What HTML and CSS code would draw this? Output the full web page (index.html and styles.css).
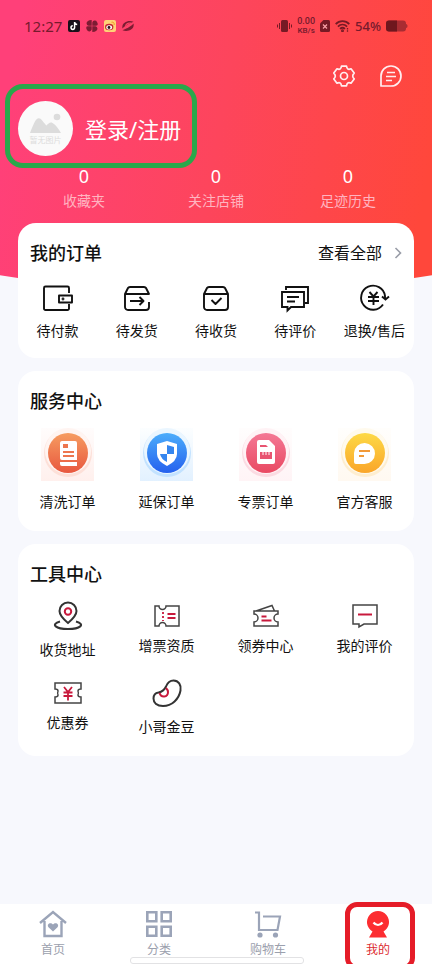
FILE: index.html
```html
<!DOCTYPE html>
<html lang="zh-CN">
<head>
<meta charset="utf-8">
<meta name="viewport" content="width=device-width, initial-scale=1">
<title>我的</title>
<link rel="stylesheet" href="styles.css">
</head>
<body>
<div class="page">
  <header class="hero">
    <div class="status">
      <div class="group left">
        <span class="time">12:27</span>
        <svg width="12" height="12" viewBox="0 0 12 12"><rect width="12" height="12" rx="2" fill="#17101a"/><path d="M6.600 2v5.600a1.800 1.800 0 1 1-1.800-1.800M6.600 2.200c.2 1.400 1.100 2.200 2.600 2.300" fill="none" stroke="#fff" stroke-width="1.500"/></svg>
        <svg width="12" height="12" viewBox="0 0 12 12" fill="#7d1c33"><path d="M5.700 0v5.700H2.500A2.500 2.500 0 0 1 2 1Q3 0 5.700 0zM6.300 5.700V2.500A2.500 2.500 0 0 1 11 2q2 3.700-1 3.700zM6.300 12V6.300h3.200A2.500 2.500 0 0 1 10 11q-1 1-3.700 1zM5.700 6.300v3.200A2.500 2.500 0 0 1 1 10q-2-3.700 1-3.700z"/></svg>
        <svg width="12" height="12" viewBox="0 0 12 12"><rect width="12" height="12" rx="2" fill="#ffd277"/><ellipse cx="5.200" cy="7" rx="4.200" ry="3.200" fill="#c52832"/><ellipse cx="5.200" cy="7.400" rx="2.900" ry="2.100" fill="#fff"/><circle cx="5" cy="7.500" r="1.400" fill="#251418"/><path d="M7.500 2.200c2-.4 3.200 1 2.600 2.800" fill="none" stroke="#f09a25"/></svg>
        <svg width="12" height="12" viewBox="0 0 12 12" fill="#7d1c33"><path d="M.5 8.500C-1 3 6-.5 11.500 1.800 9 3 4 4.500.5 8.500zM11.500 3.500C13 9 6 12.500.5 10.200 3 9 8 7.500 11.500 3.500z"/><path d="M3 6.500C5 4.500 7.500 3.200 9.500 2.800 8 1.800 3 2.500 3 6.500z" fill="#fb4566"/></svg>
      </div>
      <div class="group">
        <svg width="15" height="14" viewBox="0 0 15 14" fill="#761a25"><rect x="4" y="1" width="7" height="12" rx="1.500"/><path d="M2 4h1v6H2zM0 5.500h1v3H0zM12 4h1v6h-1zM14 5.500h1v3h-1z"/></svg>
        <span class="speed"><span>0.00</span><span class="unit">KB/s</span></span>
        <svg width="10" height="12" viewBox="0 0 10 12"><path d="M3.500 0H8.500A1.500 1.500 0 0 1 10 1.500v9A1.500 1.500 0 0 1 8.500 12h-7A1.500 1.500 0 0 1 0 10.500v-7z" fill="#761a25"/><path d="M3 4.500l4 4M7 4.500l-4 4" stroke="#f9a0a6" stroke-width="1.200"/></svg>
        <svg width="15" height="12" viewBox="0 0 15 12" fill="none" stroke="#761a25" stroke-width="1.700"><path d="M.7 4.200C4.500.2 10.500.2 14.300 4.200M2.900 6.600c2.700-2.700 6.500-2.700 9.200 0M5 8.900c1.500-1.400 3.500-1.400 5 0"/><circle cx="7.500" cy="10.800" r=".6"/><path d="M12.500 8v1.500M12.500 10.300v1.500" stroke-width="1.300"/></svg>
        <span class="percent">54%</span>
        <svg width="22" height="12" viewBox="0 0 22 12"><rect y=".5" width="20" height="11" rx="3" fill="#a92c32"/><path d="M3 .5h8v11H3a3 3 0 0 1-3-3v-5a3 3 0 0 1 3-3z" fill="#6f171e"/><path d="M20 4c2 0 2 4 0 4z" fill="#a92c32"/></svg>
      </div>
    </div>
    <div class="tools">
      <button type="button" aria-label="设置"><svg width="24" height="24" viewBox="0 0 24 24" fill="none" stroke="#ffeef0" stroke-width="1.700" stroke-linejoin="round"><path d="M9.500 2.200h5c.4 3 1.800 3.700 4.500 2.600l3.200 4.300c-2 1.900-2 3.900 0 5.800L19 19.200c-2.700-1.100-4.100-.4-4.500 2.600h-5c-.4-3-1.800-3.700-4.500-2.600l-3.200-4.300c2-1.900 2-3.900 0-5.800L5 4.800c2.700 1.100 4.100.4 4.500-2.600z"/><circle cx="12" cy="12" r="3.500"/></svg></button>
      <button type="button" aria-label="消息"><svg width="24" height="24" viewBox="0 0 24 24" fill="none" stroke="#ffeef0" stroke-width="1.700"><path d="M2 22V12A10 10 0 1 1 12 22z" stroke-linejoin="round"/><path d="M8 8.500h8M7 12.500h10M7 16.500h6"/></svg></button>
    </div>
    <a class="profile" href="#">
      <span class="avatar">
        <svg width="32" height="22" viewBox="0 0 32 22" fill="#dcdcdc"><path d="M0 20C3 13 5 6 8.500 5.300c3-.4 5 4.700 8 7.200 2-2 3.500-3.800 6-2.500 3.500 2 6 6 8.500 10z"/><circle cx="27" cy="4" r="3.300"/></svg>
        <span>暂无图片</span>
      </span>
      <span class="login">登录/注册</span>
    </a>
    <nav class="stats">
      <a href="#"><b>0</b><span>收藏夹</span></a>
      <a href="#"><b>0</b><span>关注店铺</span></a>
      <a href="#"><b>0</b><span>足迹历史</span></a>
    </nav>
  </header>

  <main class="cards">
    <section class="card orders">
      <div class="head">
        <h2>我的订单</h2>
        <a class="more" href="#">查看全部 <svg width="8" height="12" viewBox="0 0 8 12" fill="none" stroke="#999da8" stroke-width="1.600"><path d="M1.500 1l5 5-5 5"/></svg></a>
      </div>
      <div class="grid five">
        <a class="item" href="#"><svg width="32" height="32" viewBox="0 0 32 32" fill="none" stroke="#111" stroke-width="1.900" stroke-linejoin="round"><path d="M27 11V6A1.500 1.500 0 0 0 25.500 4.500h-22A1.500 1.500 0 0 0 2 6v20.500A1.500 1.500 0 0 0 3.500 28h22a1.500 1.500 0 0 0 1.500-1.500V22M17 13.500h13v7H17z"/><circle cx="21" cy="17" r=".5"/></svg><span>待付款</span></a>
        <a class="item" href="#"><svg width="32" height="32" viewBox="0 0 32 32" fill="none" stroke="#111" stroke-width="1.900" stroke-linejoin="round"><path d="M28 20v5a3 3 0 0 1-3 3H7a3 3 0 0 1-3-3V12l3-6q.5-1 2-1h14q1.500 0 2 1l3 6H4"/><path d="M9 19h13M18.500 15l4 4-4 4"/></svg><span>待发货</span></a>
        <a class="item" href="#"><svg width="32" height="32" viewBox="0 0 32 32" fill="none" stroke="#111" stroke-width="1.900" stroke-linejoin="round"><path d="M4 12l3-6q.5-1 2-1h14q1.500 0 2 1l3 6v13a3 3 0 0 1-3 3H7a3 3 0 0 1-3-3zM4 12h24M11.500 18l4 4 6-6"/></svg><span>待收货</span></a>
        <a class="item" href="#"><svg width="32" height="32" viewBox="0 0 32 32" fill="none" stroke="#111" stroke-width="1.900"><path d="M3 10h22v15H12l-3.500 3.500V25H3zM7 8V5h22v16h-3M8 15h12M8 19.500h8"/></svg><span>待评价</span></a>
        <a class="item" href="#"><svg width="32" height="32" viewBox="0 0 32 32" fill="none" stroke="#111" stroke-width="1.900"><path d="M25 22.500A12 12 0 1 1 27 14v3"/><path d="M24 14.500l3.500 3 3.500-3M11.500 10l4 4.500 4-4.500M10 15h11M10 19h11M15.500 14.500V23"/></svg><span>退换/售后</span></a>
      </div>
    </section>

    <section class="card services">
      <div class="head"><h2>服务中心</h2></div>
      <div class="grid four">
        <a class="item" href="#"><svg width="53" height="53" viewBox="0 0 53 53"><defs><linearGradient id="orange" x2="0" y2="1"><stop stop-color="#f69c61"/><stop offset="1" stop-color="#e8583f"/></linearGradient><linearGradient id="orange-bg" x2="0" y2="1"><stop stop-color="#fffcfc"/><stop offset="1" stop-color="#fff0ed"/></linearGradient></defs><path fill="url(#orange-bg)" d="M0 0h53v53H0z"/><circle cx="27" cy="25" r="24" fill="#fde0d8"/><circle cx="27" cy="23" r="23" fill="#fff4f1"/><circle cx="27" cy="25" r="20" fill="url(#orange)"/><path d="M21 13h13q2 0 2 2v17H21q-2 0-2-2V15q0-2 2-2zM19 34h17v4H21q-2 0-2-2z" fill="#fff"/><path d="M22 16h5v4h-5zM22 23h11v2H22zM22 27h11v2H22z" fill="#ed764e"/></svg><span>清洗订单</span></a>
        <a class="item" href="#"><svg width="53" height="53" viewBox="0 0 53 53"><defs><linearGradient id="blue" x2="0" y2="1"><stop stop-color="#4badfb"/><stop offset="1" stop-color="#2561ee"/></linearGradient><linearGradient id="blue-bg" x2="0" y2="1"><stop stop-color="#fcfeff"/><stop offset="1" stop-color="#e2f1ff"/></linearGradient></defs><path fill="url(#blue-bg)" d="M0 0h53v53H0z"/><circle cx="27" cy="25" r="24" fill="#c2e2ff"/><circle cx="27" cy="23" r="23" fill="#eaf6ff"/><circle cx="27" cy="25" r="20" fill="url(#blue)"/><path d="M27 13l10 3v10q0 7-10 12-10-5-10-12V16z" fill="#fff"/><path d="M27 17l7 2v7h-7zM20 26h7v8q-6-3-7-8z" fill="#3586ef"/></svg><span>延保订单</span></a>
        <a class="item" href="#"><svg width="53" height="53" viewBox="0 0 53 53"><defs><linearGradient id="pink" x2="0" y2="1"><stop stop-color="#f47895"/><stop offset="1" stop-color="#e94962"/></linearGradient><linearGradient id="pink-bg" x2="0" y2="1"><stop stop-color="#fffdfd"/><stop offset="1" stop-color="#fff4f6"/></linearGradient></defs><path fill="url(#pink-bg)" d="M0 0h53v53H0z"/><circle cx="27" cy="25" r="24" fill="#fbdbe2"/><circle cx="27" cy="23" r="23" fill="#fff2f5"/><circle cx="27" cy="25" r="20" fill="url(#pink)"/><path d="M20 12h10l6 6v16q0 2-2 2H20q-2 0-2-2V14q0-2 2-2z" fill="#fff"/><path d="M21 17h6l2 2h-8zM21 24h12v7H21z" fill="#e85470"/><path d="M24 24v3M27 24v3M30 24v3" stroke="#fff"/></svg><span>专票订单</span></a>
        <a class="item" href="#"><svg width="53" height="53" viewBox="0 0 53 53"><defs><linearGradient id="yellow" x2="0" y2="1"><stop stop-color="#fdd946"/><stop offset="1" stop-color="#faa62a"/></linearGradient><linearGradient id="yellow-bg" x2="0" y2="1"><stop stop-color="#fffefc"/><stop offset="1" stop-color="#fff9f1"/></linearGradient></defs><path fill="url(#yellow-bg)" d="M0 0h53v53H0z"/><circle cx="27" cy="25" r="24" fill="#feeed0"/><circle cx="27" cy="23" r="23" fill="#fffaed"/><circle cx="27" cy="25" r="20" fill="url(#yellow)"/><path d="M16 25a10.500 10.500 0 1 1 10.500 11H18q-2 0-2-2z" fill="#fff"/><path d="M21 23h11M21 28h5" stroke="#f29a38" stroke-width="2.200"/></svg><span>官方客服</span></a>
      </div>
    </section>

    <section class="card toolbox">
      <div class="head"><h2>工具中心</h2></div>
      <div class="grid four">
        <a class="item tall" href="#"><svg width="36" height="36" viewBox="0 0 36 36" fill="none" stroke="#333" stroke-width="2"><path d="M18 25C12 20 9.500 17 9.500 13a8.500 8.500 0 0 1 17 0c0 4-2.500 7-8.500 12z"/><path d="M10 23.500c-10 3-4 7.500 8 7.500s18-4.500 8-7.500"/><circle cx="18" cy="13.500" r="3.200" stroke="#c8193c"/></svg><span>收货地址</span></a>
        <a class="item" href="#"><svg width="28" height="28" viewBox="0 0 28 28" fill="none" stroke="#444" stroke-width="1.500"><path d="M2 4h4a3.500 3.500 0 0 0 7 0h13v20H13a3.500 3.500 0 0 0-7 0H2z"/><path d="M10 10v2M10 14v2M10 18v1M14.500 12h8M14.500 16h8" stroke="#c8193c" stroke-width="1.800"/></svg><span>增票资质</span></a>
        <a class="item" href="#"><svg width="28" height="28" viewBox="0 0 28 28" fill="none" stroke="#444" stroke-width="1.500"><path d="M2 9h24v3a4 4 0 0 0 0 8v4H2v-4a4 4 0 0 0 0-8zM4 9l16-5.500L22.500 9"/><path d="M9.500 14.500h5M9.500 18.500h10" stroke="#c8193c" stroke-width="1.800"/></svg><span>领券中心</span></a>
        <a class="item" href="#"><svg width="28" height="28" viewBox="0 0 28 28" fill="none" stroke="#444" stroke-width="1.500"><path d="M2 3h24v19H13l-5 3v-3H2z"/><path d="M7 12.500h14" stroke="#c8193c" stroke-width="2"/></svg><span>我的评价</span></a>
        <a class="item" href="#"><svg width="28" height="28" viewBox="0 0 28 28" fill="none" stroke="#444" stroke-width="1.500"><path d="M1 4h26v6q-3 0-3 2 0 2 1 2-1 0-1 2 0 2 3 2v6H1v-6q3 0 3-2 0-2-1-2 1 0 1-2 0-2-3-2z"/><path d="M10 8l4 5 4-5M9.500 13.500h9M9.500 17h9M14 13v8.500" stroke="#c8193c" stroke-width="1.800"/></svg><span>优惠券</span></a>
        <a class="item tall" href="#"><svg width="36" height="36" viewBox="0 0 36 36" fill="none" stroke="#333" stroke-width="2"><path d="M9.500 17.500c4.500-1 6-2.500 7.500-6 1.600-4 4-6 7.500-6 5 0 8 4.500 7 10C30 24 23 31 14 31 8 31 4.500 28 4.500 23.500c0-3.500 2-5.500 5-6z"/><path d="M10.500 18c1.500 5 8.500 4.500 8.500-1 0-1.500-.5-2.500-2-4" stroke="#c8193c"/></svg><span>小哥金豆</span></a>
      </div>
    </section>
  </main>

  <nav class="tabs">
    <a href="#"><svg width="28" height="28" viewBox="0 0 28 28"><path d="M1 13L14 2l13 11M5.500 11v15h17V11" fill="none" stroke="#9ba4b8" stroke-width="2.400"/><path d="M14 21.500l-4.500-4.300c-2.300-3 2-5.700 4.500-2.700 2.500-3 6.800-.3 4.500 2.700z" fill="#9ba4b8"/></svg><span>首页</span></a>
    <a href="#"><svg width="28" height="28" viewBox="0 0 28 28" fill="none" stroke="#9ba4b8" stroke-width="2.600"><path d="M2.300 2.300h9v9h-9zM16.700 2.300h9v9h-9zM2.300 16.700h9v9h-9zM16.700 16.700h9v9h-9z"/></svg><span>分类</span></a>
    <a href="#"><svg width="28" height="28" viewBox="0 0 28 28"><path d="M1 2.500h4V20h18.500L26 6.500H9" fill="none" stroke="#9ba4b8" stroke-width="2.200"/><circle cx="6" cy="25" r="2.600" fill="#9ba4b8"/><circle cx="21.500" cy="25" r="2.600" fill="#9ba4b8"/></svg><span>购物车</span></a>
    <a class="active" href="#" aria-current="page"><svg width="28" height="28" viewBox="0 0 28 28"><path d="M8.500 21.500a11 11 0 1 1 11 0l3.500 6H5z" fill="#fc2d31"/><path d="M9.500 12.500c2.500 3.300 6.500 3.300 9 0" fill="none" stroke="#fff" stroke-width="2.200"/></svg><span>我的</span></a>
  </nav>
</div>
</body>
</html>
```
FILE: styles.css
```css
* { box-sizing: border-box; }

body {
  margin: 0;
  background: #f7f8fd;
  color: #111;
  font-family: "Noto Sans", "Noto Sans CJK SC", sans-serif;
  font-size: 14px;
  line-height: 20px;
}

a { color: inherit; text-decoration: none; }
svg { display: block; flex: none; }

.page {
  position: relative;
  isolation: isolate;
  display: flex;
  flex-direction: column;
  min-height: 100vh;
}

/* Curved backdrop that continues behind the first card */
.page::before {
  content: "";
  position: absolute;
  z-index: -1;
  inset: 0 0 auto;
  height: 292px;
  background: linear-gradient(100deg, #ff4079 5%, #fd455c 50%, #ff473b 95%);
  clip-path: ellipse(150% 100% at 50% 0);
}

.hero { padding: 16px 18px 12px; color: #fff; }

.status {
  display: flex;
  justify-content: space-between;
  height: 20px;
  padding: 0 6px;
  color: #761a2d;
}
.group { display: flex; align-items: center; gap: 5px; }
.left { gap: 6px; }
.time { font-size: 15px; }
.speed {
  display: flex;
  flex-direction: column;
  align-items: center;
  font-family: Roboto, sans-serif;
  font-size: 9px;
  font-weight: 500;
  line-height: 10px;
}
.unit { font-size: 8px; }
.percent { font-size: 13px; font-weight: 500; }

.tools {
  display: flex;
  justify-content: flex-end;
  gap: 23px;
  padding: 28px 11px 13px;
}
.tools button { padding: 0; border: 0; background: none; }

.profile {
  position: relative;
  display: flex;
  align-items: center;
  gap: 12px;
  width: fit-content;
}
.profile::after {
  content: "";
  position: absolute;
  inset: -17px -16px -12px -13px;
  border: 5px solid #29a84b;
  border-radius: 18px;
}
.avatar {
  display: flex;
  flex-direction: column;
  align-items: center;
  width: 55px;
  height: 55px;
  padding-top: 12px;
  border-radius: 50%;
  background: #fafafa;
  color: #dcdcdc;
  font-size: 8px;
  line-height: 10px;
}
.login { font-size: 22px; line-height: 30px; }

.stats {
  display: grid;
  grid-template-columns: repeat(3, 1fr);
  padding-top: 9px;
  text-align: center;
}
.stats a { display: flex; flex-direction: column; gap: 4px; }
.stats b { font-size: 18px; font-weight: 400; line-height: 22px; }
.stats span { color: #ffb4c0; }

.cards {
  display: flex;
  flex: 1;
  flex-direction: column;
  gap: 13px;
  padding: 0 18px 24px;
}
.card { border-radius: 18px; background: #fff; }
.head {
  display: flex;
  align-items: center;
  justify-content: space-between;
  padding: 16px 12px 0;
}
h2 { margin: 0; font-size: 18px; font-weight: 500; line-height: 28px; }
.more { display: flex; align-items: center; gap: 12px; font-size: 16px; }

.grid { display: grid; }
.five { grid-template-columns: repeat(5, 1fr); }
.four { grid-template-columns: repeat(4, 1fr); }
.item {
  display: flex;
  flex-direction: column;
  align-items: center;
  white-space: nowrap;
}

.orders .grid { padding: 15px 0 17px; }
.orders .item { gap: 7px; }
.services .grid { padding: 13px 0 19px; }
.services .item { gap: 11px; }
.toolbox .grid { row-gap: 15px; padding: 10px 0 19px; }
.toolbox .item { gap: 6px; padding-top: 4px; }
.toolbox .tall { padding-top: 0; }

.tabs {
  position: relative;
  display: grid;
  grid-template-columns: 106fr 106fr 112fr 108fr;
  height: 60px;
  background: #fff;
  color: #9ba0ad;
  font-size: 12px;
  line-height: 16px;
}
.tabs::after {
  content: "";
  position: absolute;
  bottom: 0;
  left: 30%;
  width: 40%;
  height: 5px;
  border: 1px solid #e2e2e4;
  border-radius: 3px;
  background: #fff;
}
.tabs a {
  position: relative;
  display: flex;
  flex-direction: column;
  align-items: center;
  gap: 4px;
  padding-top: 6px;
}
.tabs .active { color: #dc2b30; }
.tabs .active::after {
  content: "";
  position: absolute;
  z-index: 1;
  inset: -2px 17px -6px 21px;
  border: 5px solid #e51c28;
  border-radius: 12px;
  clip-path: inset(0 0 6px);
}
```
